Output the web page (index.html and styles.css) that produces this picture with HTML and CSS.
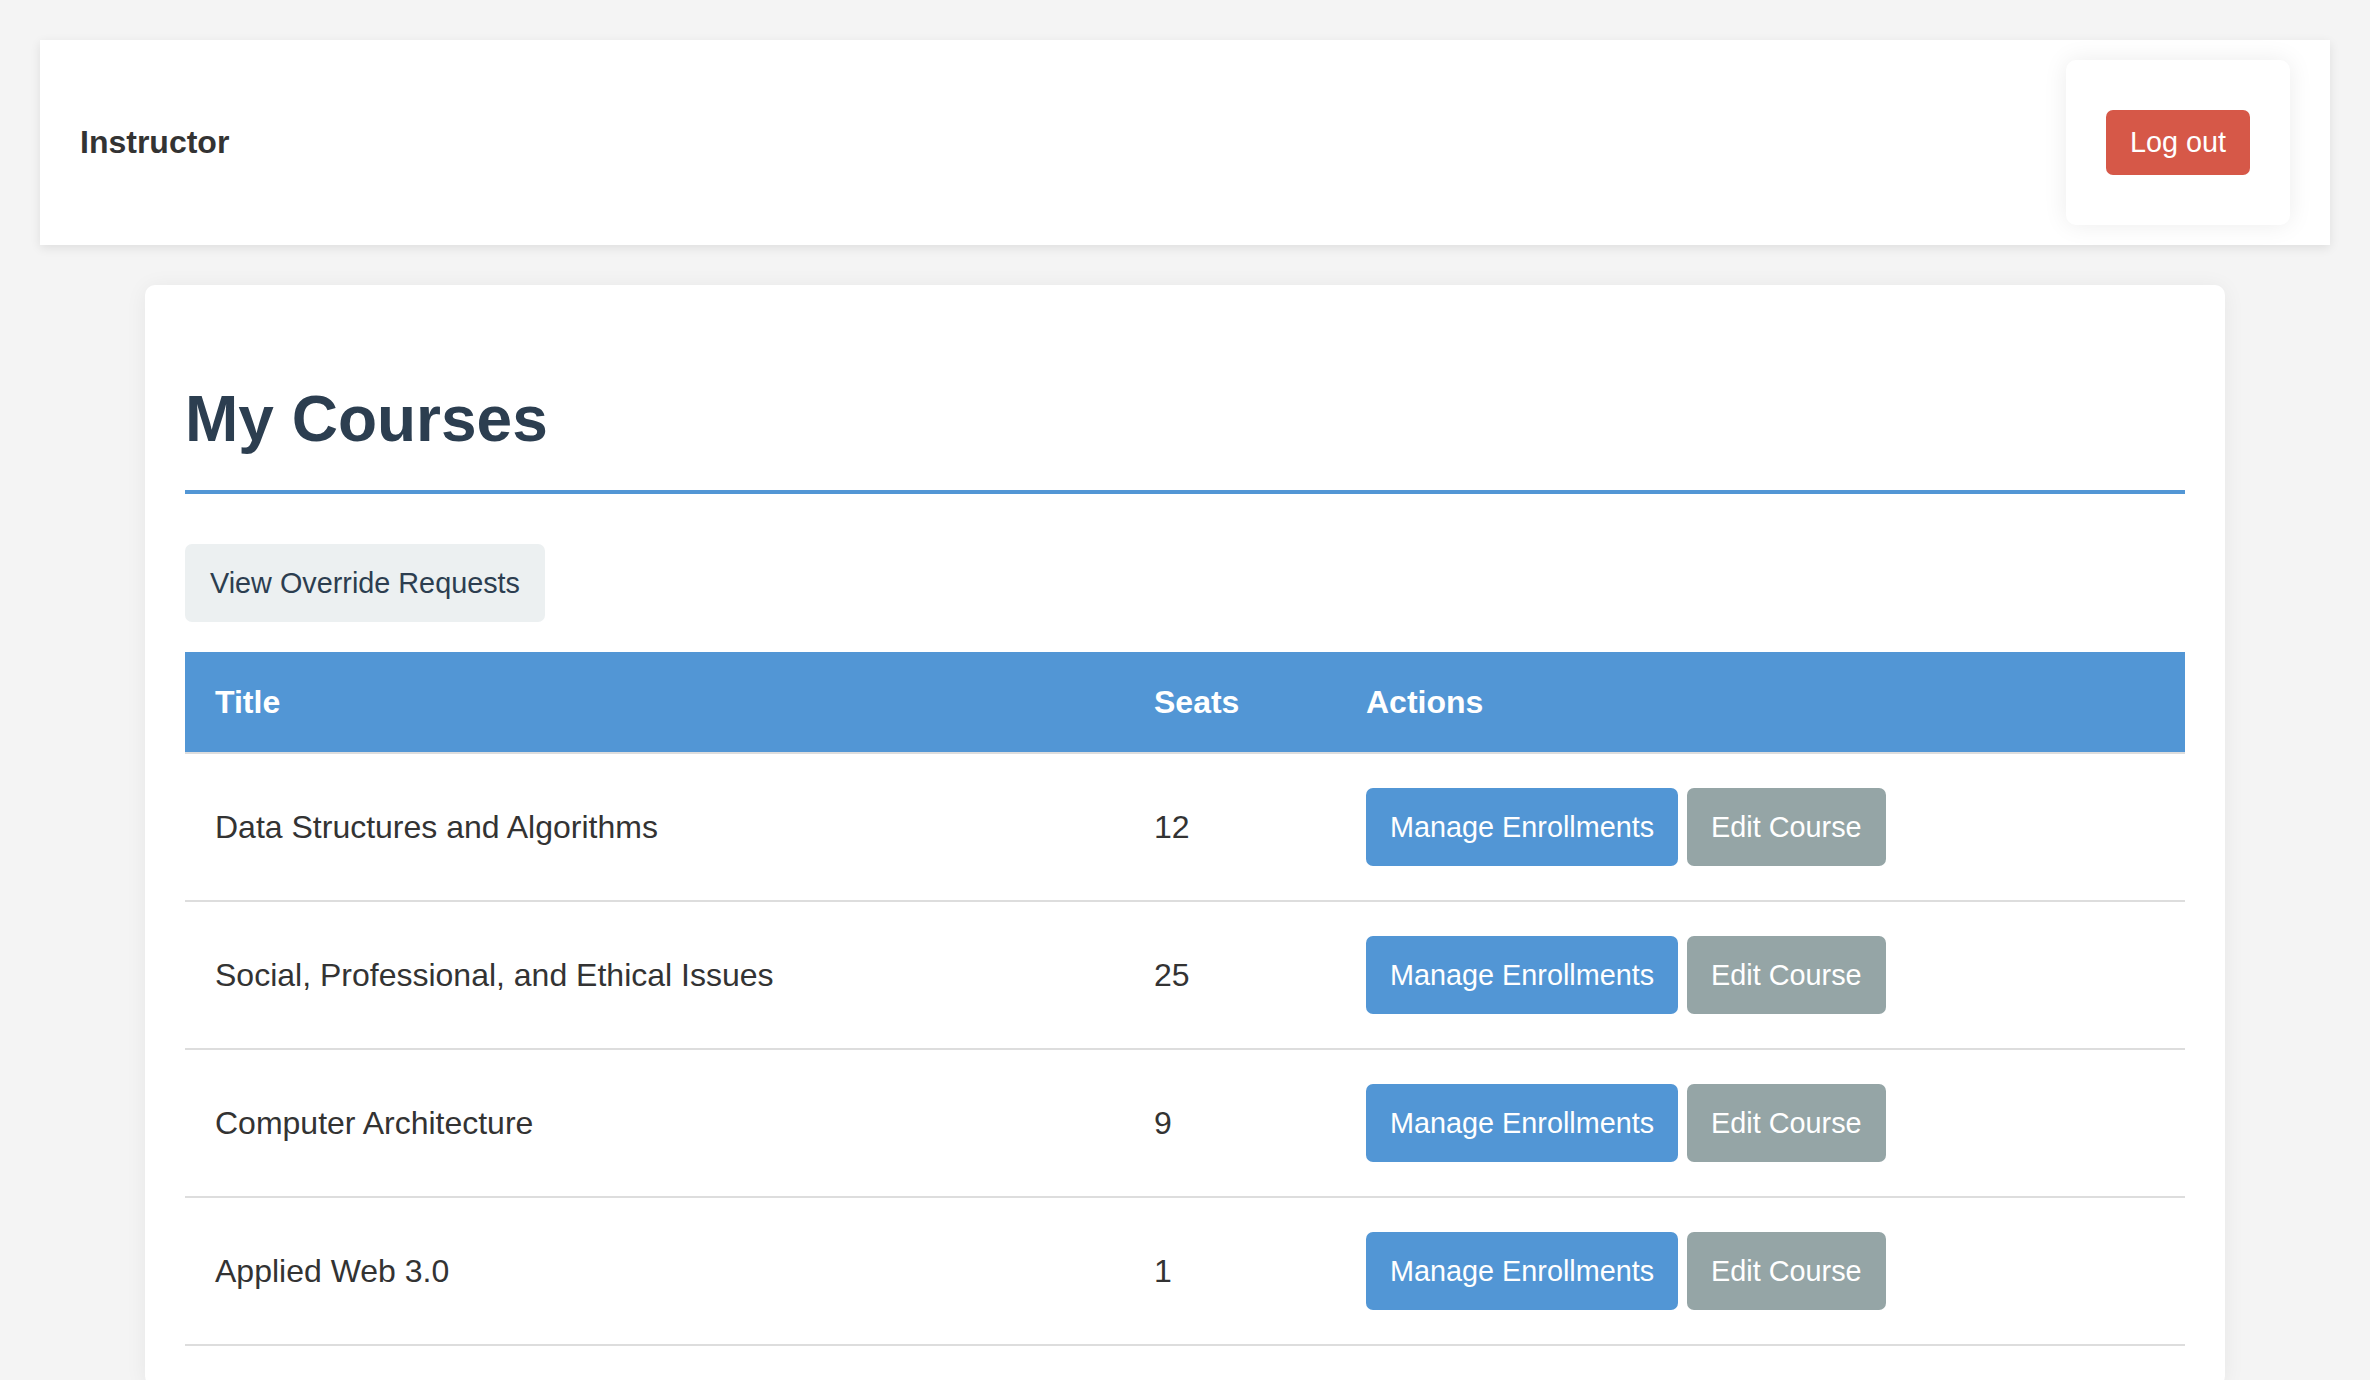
FILE: index.html
```html
<!DOCTYPE html>
<html lang="en">
<head>
<meta charset="utf-8">
<title>My Courses</title>
<link rel="stylesheet" href="styles.css">
</head>
<body>
<header class="topbar">
  <div class="role">Instructor</div>
  <div class="logout-card">
    <button class="btn btn-danger">Log out</button>
  </div>
</header>
<main class="panel">
  <h1 class="page-title">My Courses</h1>
  <button class="btn btn-light">View Override Requests</button>
  <table class="courses">
    <colgroup>
      <col class="col-title">
      <col class="col-seats">
      <col class="col-actions">
    </colgroup>
    <thead>
      <tr><th>Title</th><th>Seats</th><th>Actions</th></tr>
    </thead>
    <tbody>
      <tr>
        <td>Data Structures and Algorithms</td>
        <td>12</td>
        <td><div class="actions"><button class="btn btn-primary">Manage Enrollments</button><button class="btn btn-gray">Edit Course</button></div></td>
      </tr>
      <tr>
        <td>Social, Professional, and Ethical Issues</td>
        <td>25</td>
        <td><div class="actions"><button class="btn btn-primary">Manage Enrollments</button><button class="btn btn-gray">Edit Course</button></div></td>
      </tr>
      <tr>
        <td>Computer Architecture</td>
        <td>9</td>
        <td><div class="actions"><button class="btn btn-primary">Manage Enrollments</button><button class="btn btn-gray">Edit Course</button></div></td>
      </tr>
      <tr>
        <td>Applied Web 3.0</td>
        <td>1</td>
        <td><div class="actions"><button class="btn btn-primary">Manage Enrollments</button><button class="btn btn-gray">Edit Course</button></div></td>
      </tr>
    </tbody>
  </table>
</main>
</body>
</html>
```
FILE: styles.css
```css
html, body {
  margin: 0;
  padding: 0;
}
body {
  background: #f4f4f4;
  font-family: "Liberation Sans", Arial, Helvetica, sans-serif;
  color: #333;
  font-size: 32px;
}

.topbar {
  margin: 40px 40px 0;
  background: #fff;
  padding: 20px 40px;
  display: flex;
  justify-content: space-between;
  align-items: center;
  box-shadow: 0 3px 10px rgba(0, 0, 0, 0.09);
}
.role {
  font-weight: bold;
  font-size: 32px;
  color: #333;
}
.logout-card {
  background: #fff;
  border-radius: 10px;
  padding: 50px 40px;
  box-shadow: 0 0 24px rgba(0, 0, 0, 0.08);
  display: flex;
}

.btn {
  font-family: "Liberation Sans", Arial, Helvetica, sans-serif;
  font-size: 28.8px;
  border: none;
  border-radius: 7px;
  padding: 20px 24px;
  line-height: 38px;
  cursor: pointer;
  white-space: nowrap;
}
.btn-danger {
  background: #d65848;
  color: #fff;
  padding: 16px 24px;
  line-height: 33px;
}
.btn-light {
  background: #ecf0f1;
  color: #2c3e50;
  padding: 20px 25px;
}
.btn-primary {
  background: #5296d5;
  color: #fff;
}
.btn-gray {
  background: #95a5a6;
  color: #fff;
}

.panel {
  width: 2080px;
  box-sizing: border-box;
  margin: 40px auto 0;
  background: #fff;
  border-radius: 10px;
  padding: 0 40px 40px;
  box-shadow: 0 2px 22px rgba(0, 0, 0, 0.06);
  overflow: hidden;
}
.page-title {
  font-size: 64px;
  line-height: 74px;
  font-weight: bold;
  color: #2c3e50;
  margin: 97px 0 50px;
  padding-bottom: 34px;
  border-bottom: 4px solid #5296d5;
}

.courses {
  width: 100%;
  margin-top: 30px;
  border-collapse: collapse;
  table-layout: fixed;
}
.col-title { width: 939px; }
.col-seats { width: 212px; }
.courses th {
  background: #5296d5;
  color: #fff;
  font-weight: bold;
  text-align: left;
  font-size: 32px;
  line-height: 36px;
  padding: 32px 30px;
  border-bottom: 2px solid #ddd;
}
.courses td {
  font-size: 32px;
  line-height: 36px;
  padding: 34px 30px;
  color: #333;
  vertical-align: middle;
  border-bottom: 2px solid #ddd;
}
.courses td:last-child {
  padding: 34px 0 34px 30px;
}
.actions {
  display: flex;
  gap: 9px;
}
```
